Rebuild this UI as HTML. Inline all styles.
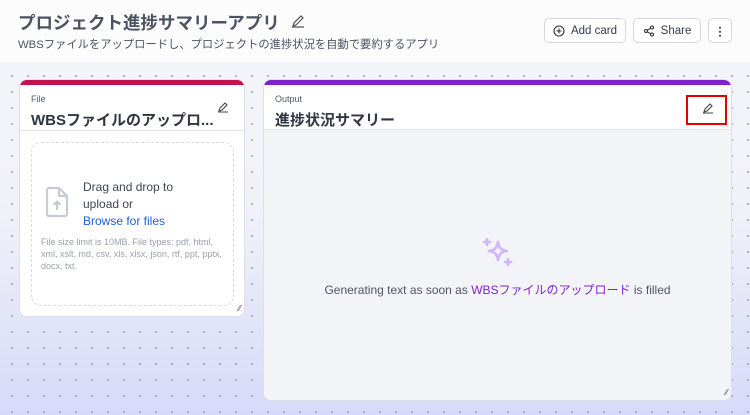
<!DOCTYPE html><html><head><meta charset="utf-8"><style>
*{box-sizing:border-box;margin:0;padding:0}
body{width:750px;height:415px;overflow:hidden;font-family:"Liberation Sans","Noto Sans CJK JP",sans-serif;position:relative;background:linear-gradient(#f4f5f9 0,#f1f2f8 200px,#d6daf9 415px)}
.dots{position:absolute;left:0;top:62px;width:750px;height:353px;background-image:radial-gradient(#9aa0b0 0.8px,transparent 1px);background-size:16px 16px;background-position:4px 6px}
.hdr{position:absolute;left:0;top:0;width:750px;height:62px;background:#fcfcfd}
.t{position:absolute;left:18px;top:10px;font-size:17.5px;font-weight:bold;color:#4b5262}
.s{position:absolute;left:18px;top:36px;font-size:11.3px;color:#4b5262}
.btn{position:absolute;top:18px;height:25px;border:1px solid #d5d8df;border-radius:5px;background:#fff;font-size:11.5px;color:#333a48;display:flex;align-items:center;justify-content:center;gap:6px}
.card{position:absolute;background:#fff;border-radius:8px;border:1px solid #dde0e8;overflow:hidden}
.bar{position:absolute;left:0;top:0;right:0;height:5px}
.lab{position:absolute;font-size:9px;color:#555b68}
.ct{position:absolute;font-size:15px;font-weight:bold;color:#2f3542}
</style></head><body>
<div class="hdr"></div><div class="dots"></div>
<div class="t">プロジェクト進捗サマリーアプリ</div>
<svg style="position:absolute;left:291px;top:14px" width="14" height="14" viewBox="0 0 14 14" fill="none" stroke="#555" stroke-width="1.2"><path d="M2 12l1-3 7-7 2 2-7 7z M1 13h12"/></svg>
<div class="s">WBSファイルをアップロードし、プロジェクトの進捗状況を自動で要約するアプリ</div>
<div class="btn" style="left:544px;width:82px"><svg width="12" height="12" viewBox="0 0 12 12" fill="none" stroke="#333" stroke-width="1.1"><circle cx="6" cy="6" r="5"/><path d="M6 3.5v5M3.5 6h5"/></svg>Add card</div>
<div class="btn" style="left:633px;width:68px"><svg width="12" height="12" viewBox="0 0 12 12" fill="none" stroke="#333" stroke-width="1.1"><circle cx="9" cy="2.5" r="1.5"/><circle cx="3" cy="6" r="1.5"/><circle cx="9" cy="9.5" r="1.5"/><path d="M4.3 5.2l3.4-2M4.3 6.8l3.4 2"/></svg>Share</div>
<div class="btn" style="left:708px;width:24px;font-weight:bold">⋮</div>

<div class="card" style="left:19px;top:79px;width:226px;height:238px">
<div class="bar" style="background:#c0134f"></div>
<div class="lab" style="left:11px;top:14px">File</div>
<div class="ct" style="left:11px;top:29px">WBSファイルのアップロ...</div>
<svg style="position:absolute;left:197px;top:21px" width="12" height="12" viewBox="0 0 12 12" fill="none" stroke="#444" stroke-width="1.1"><path d="M2 10l1-3 5-5 2 2-5 5z M1 11h10"/></svg>
<div style="position:absolute;left:0;right:0;top:50px;border-top:1px solid #e3e5ea"></div>
<div style="position:absolute;left:11px;top:62px;width:203px;height:164px;border:1.5px dashed #d7dae0;border-radius:10px"></div>
<svg style="position:absolute;left:24px;top:106px" width="26" height="32" viewBox="0 0 26 32" fill="none" stroke="#c7cbd3" stroke-width="2.2" stroke-linejoin="round"><path d="M3 4a2 2 0 0 1 2-2h10l8 8v18a2 2 0 0 1-2 2H5a2 2 0 0 1-2-2z M15 2v8h8"/><path d="M13 24v-8M9.5 19l3.5-3.5 3.5 3.5"/></svg>
<div style="position:absolute;left:63px;top:99px;font-size:12px;line-height:17px;color:#3d4452">Drag and drop to<br>upload or<br><span style="color:#1d5fd6">Browse for files</span></div>
<div style="position:absolute;left:21px;top:156px;width:185px;font-size:9px;line-height:12px;color:#9aa0ab">File size limit is 10MB. File types: pdf, html, xml, xslt, md, csv, xls, xlsx, json, rtf, ppt, pptx, docx, txt.</div>
<div style="position:absolute;right:3px;bottom:3px;font-size:8px;color:#555">⁄⁄</div>
</div>

<div class="card" style="left:263px;top:79px;width:469px;height:322px;background:#f3f4f8">
<div style="position:absolute;left:0;top:0;right:0;height:50px;background:#fff;border-bottom:1px solid #e3e5ea"></div>
<div class="bar" style="background:#7e22ce"></div>
<div class="lab" style="left:11px;top:14px">Output</div>
<div class="ct" style="left:11px;top:29px">進捗状況サマリー</div>
<div style="position:absolute;left:422px;top:15px;width:41px;height:30px;border:2.5px solid #e00000"></div>
<svg style="position:absolute;left:438px;top:22px" width="12" height="12" viewBox="0 0 12 12" fill="none" stroke="#444" stroke-width="1.1"><path d="M2 10l1-3 5-5 2 2-5 5z M1 11h10"/></svg>
<svg style="position:absolute;left:219px;top:157px" width="32" height="32" viewBox="0 0 32 32" fill="none" stroke="#d2b4fb" stroke-width="2.6" stroke-linecap="round" stroke-linejoin="round"><path d="M15 5c1 6 3 8 9 9-6 1-8 3-9 9-1-6-3-8-9-9 6-1 8-3 9-9z"/><path d="M4 2v6M1 5h6M25 22v6M22 25h6"/></svg>
<div style="position:absolute;left:0;right:0;top:201px;text-align:center;font-size:12px;color:#4f5666">Generating text as soon as <span style="color:#7e22ce">WBSファイルのアップロード</span> is filled</div>
<div style="position:absolute;right:3px;bottom:3px;font-size:8px;color:#555">⁄⁄</div>
</div>
</body></html>
